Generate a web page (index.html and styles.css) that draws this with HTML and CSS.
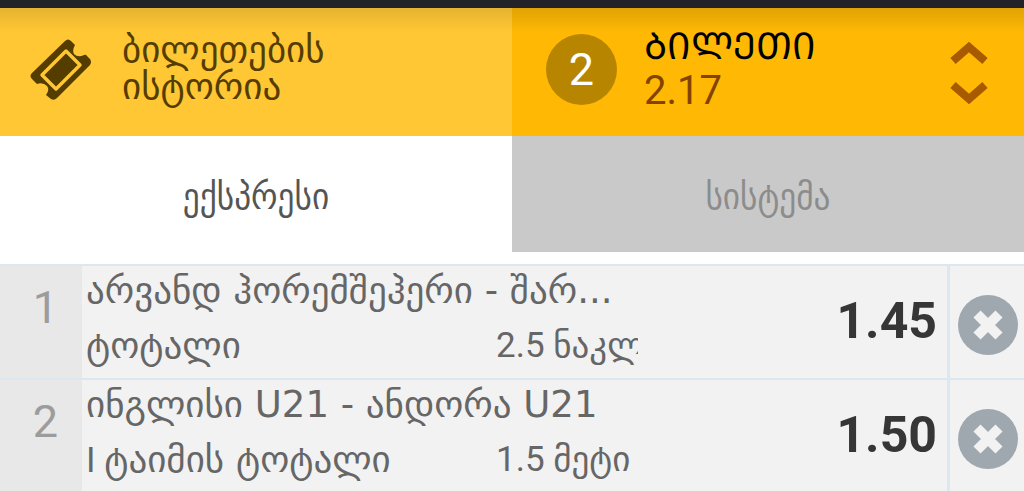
FILE: index.html
```
<!DOCTYPE html>
<html lang="ka">
<head>
    <meta charset="utf-8">
    <title>ბილეთი</title>
    <meta name="viewport" content="width=device-width, initial-scale=1">
    <link rel="stylesheet" href="styles.css">
</head>
<body>
    <header class="top">
        <a href="#history" class="history">
            <svg class="ticket" viewBox="0 0 62 62" aria-hidden="true">
                <path fill="#553d00" d="M35 2Q38-1 41 2L45 6Q42 11 44 15Q48 19 54 16Q56 15 57 17L60 20Q62 23 60 26L27 59Q24 62 21 60L16 56Q20 51 17 47Q13 43 7 45L2 40Q-1 37 2 34Z"/>
                <path fill="none" stroke="#ffc733" stroke-width="3.4" stroke-linejoin="round" d="M36 12L50 26L26 50L12 36Z"/>
            </svg>
            <span class="ka">ბილეთების<br>ისტორია</span>
        </a>
        <button type="button" class="slip">
            <span class="count">2</span>
            <span class="slip-text">
                <span class="slip-title">ᲑᲘᲚᲔᲗᲘ</span>
                <span class="slip-odds">2.17</span>
            </span>
            <svg class="arrows" viewBox="0 0 38 64" aria-hidden="true">
                <path d="M3 20L19 6L35 20M3 44L19 58L35 44"/>
            </svg>
        </button>
    </header>

    <nav class="tabs">
        <button type="button" class="tab active">ექსპრესი</button>
        <button type="button" class="tab">სისტემა</button>
    </nav>

    <main class="bets">
        <div class="bet">
            <div class="num">1</div>
            <div class="info">
                <div class="match">არვანდ ჰორემშეჰერი - შარ...</div>
                <div class="market">
                    <span class="ka">ტოტალი</span>
                    <span class="pick">2.5 ნაკლები</span>
                </div>
            </div>
            <div class="odds">1.45</div>
            <button type="button" class="remove" aria-label="წაშლა">
                <svg viewBox="0 0 60 60"><circle cx="30" cy="30" r="30"/><path d="M19 19L41 41M41 19L19 41"/></svg>
            </button>
        </div>
        <div class="bet">
            <div class="num">2</div>
            <div class="info">
                <div class="match">ინგლისი U21 - ანდორა U21</div>
                <div class="market">
                    <span>I <span class="ka">ტაიმის ტოტალი</span></span>
                    <span class="pick">1.5 მეტი</span>
                </div>
            </div>
            <div class="odds">1.50</div>
            <button type="button" class="remove" aria-label="წაშლა">
                <svg viewBox="0 0 60 60"><circle cx="30" cy="30" r="30"/><path d="M19 19L41 41M41 19L19 41"/></svg>
            </button>
        </div>
    </main>
</body>
</html>
```
FILE: styles.css
```
* {
    box-sizing: border-box;
}

body {
    margin: 0;
    border-top: 8px solid #222329;
    font-family: Roboto, "DejaVu Sans", sans-serif;
    background: #fff;
    color: #666;
}

button {
    margin: 0;
    padding: 0;
    border: none;
    background: none;
    font-family: inherit;
    cursor: pointer;
}

.ka {
    font-family: "DejaVu Sans", sans-serif;
    font-size: 37px;
}

.top {
    display: grid;
    grid-template-columns: 1fr 1fr;
    height: 128px;
    background: #ffb803;
}

.history {
    display: flex;
    align-items: center;
    gap: 30px;
    padding: 0 30px 8px;
    background: linear-gradient(#e5b32f, #ffc733 24px);
    color: #553d00;
    line-height: 37px;
    text-decoration: none;
}

.ticket {
    flex: none;
    width: 62px;
    height: 62px;
    margin-top: 4px;
}

.slip {
    display: flex;
    align-items: center;
    padding: 0 36px 6px 34px;
    background: linear-gradient(#e0a303, #ffb803 24px);
    text-align: left;
}

.count {
    width: 71px;
    height: 71px;
    border-radius: 50%;
    background: #b88500;
    color: #fff;
    font-size: 45px;
    line-height: 71px;
    text-align: center;
}

.slip-text {
    flex: 1;
    margin-left: 27px;
}

.slip-title,
.slip-odds {
    display: block;
    font-size: 40px;
    line-height: 44px;
}

.slip-title {
    color: #000;
    font-size: 37px;
}

.slip-odds {
    color: #834300;
}

.arrows {
    width: 38px;
    height: 64px;
    margin-top: 8px;
    fill: none;
    stroke: #a85a00;
    stroke-width: 8;
}

.tabs {
    display: grid;
    grid-template-columns: 1fr 1fr;
    height: 116px;
    margin-bottom: 12px;
}

.tab {
    padding-top: 4px;
    background: #c9c9c9;
    color: #8c8c8c;
    font-family: "DejaVu Sans Condensed", "DejaVu Sans", sans-serif;
    font-size: 37px;
}

.tab.active {
    background: #fff;
    color: #555;
}

.bet {
    display: flex;
    height: 114px;
    border-top: 2px solid #dbe8f0;
    background: #f2f2f2;
}

.num {
    flex: none;
    width: 82px;
    padding: 16px 24px 0 0;
    background: #e8e8e8;
    color: #9c9c9c;
    font-size: 45px;
    line-height: 52px;
    text-align: right;
}

.info {
    flex: 1;
    min-width: 0;
    padding-left: 4px;
    white-space: nowrap;
}

.match {
    font-family: "DejaVu Sans", sans-serif;
    font-size: 37px;
    line-height: 50px;
}

.market {
    display: flex;
    justify-content: space-between;
    font-size: 35px;
    line-height: 60px;
}

.pick {
    width: 142px;
    overflow: hidden;
}

.odds {
    flex: none;
    width: 309px;
    padding-right: 10px;
    color: #363636;
    font-size: 50px;
    font-weight: bold;
    line-height: 110px;
    text-align: right;
}

.remove {
    flex: none;
    width: 77px;
    padding-left: 2px;
    border-left: 3px solid #dbe8f0;
}

.remove svg {
    display: block;
    width: 60px;
    height: 60px;
    margin: 6px auto 0;
}

.remove circle {
    fill: #9fa8ae;
}

.remove path {
    stroke: #f2f2f2;
    stroke-width: 10;
}
```
